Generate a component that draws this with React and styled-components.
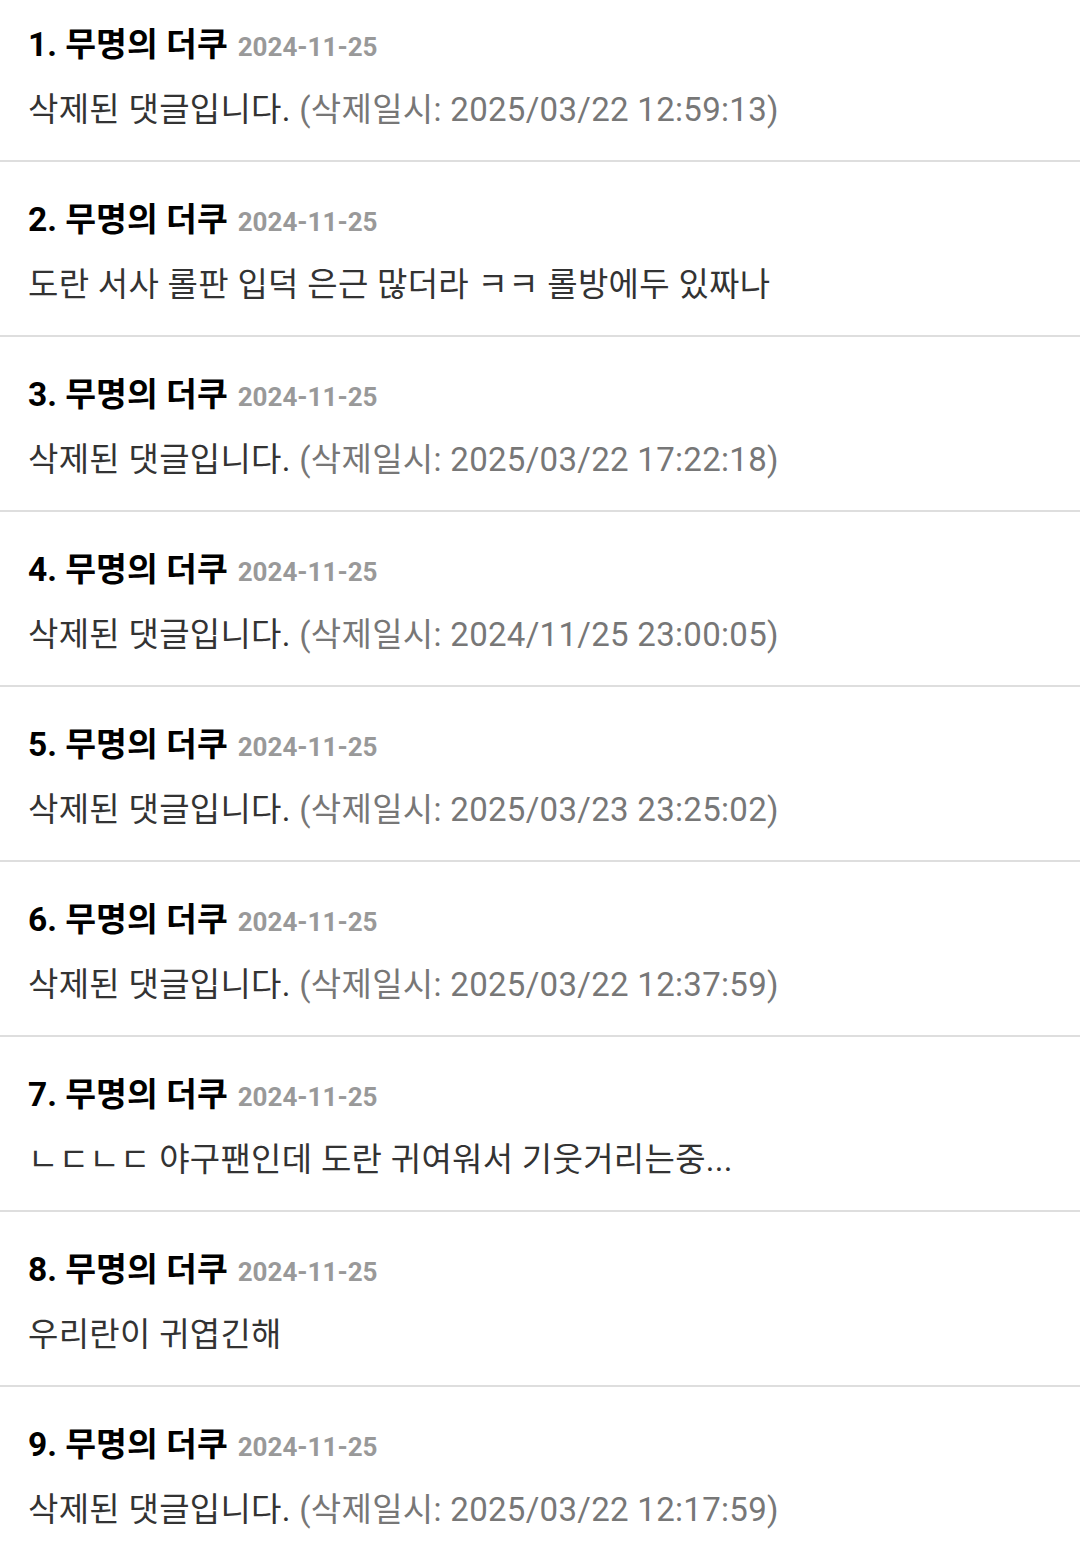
import React from 'react'
import styled, { createGlobalStyle } from 'styled-components'

const GlobalStyle = createGlobalStyle`
	html, body {
		margin: 0;
		padding: 0;
		background: #fff;
	}
	body {
		font-family: Roboto, 'Noto Sans CJK KR', sans-serif;
	}
`

const comments = [
	{ text: '삭제된 댓글입니다.', deleted: '2025/03/22 12:59:13' },
	{ text: '도란 서사 롤판 입덕 은근 많더라 ㅋㅋ 롤방에두 있짜나' },
	{ text: '삭제된 댓글입니다.', deleted: '2025/03/22 17:22:18' },
	{ text: '삭제된 댓글입니다.', deleted: '2024/11/25 23:00:05' },
	{ text: '삭제된 댓글입니다.', deleted: '2025/03/23 23:25:02' },
	{ text: '삭제된 댓글입니다.', deleted: '2025/03/22 12:37:59' },
	{ text: 'ㄴㄷㄴㄷ 야구팬인데 도란 귀여워서 기웃거리는중...' },
	{ text: '우리란이 귀엽긴해' },
	{ text: '삭제된 댓글입니다.', deleted: '2025/03/22 12:17:59' },
]

const StyledList = styled.ul`
	list-style: none;
	margin: 0;
	padding: 0;
`

const StyledItem = styled.li`
	height: 175px;
	box-sizing: border-box;
	padding: 36px 28px 0;
	border-bottom: 2px solid #dedede;
	display: flex;
	flex-direction: column;
	gap: 19px;
	&:first-child {
		height: 162px;
		padding-top: 23px;
	}
	&:last-child {
		border-bottom: none;
	}
`

const Header = styled.div`
	display: flex;
	align-items: baseline;
	gap: 10px;
	line-height: 44px;
`

const Name = styled.span`
	font-size: 33.5px;
	font-weight: 700;
	color: #000;
`

const DateText = styled.span`
	font-size: 26px;
	font-weight: 700;
	color: #999;
`

const Body = styled.p`
	margin: 0;
	font-size: 33px;
	line-height: 44px;
	letter-spacing: 0.3px;
	color: #333;
`

const DeletedAt = styled.span`
	color: #777;
`

export default function App() {
	return (
		<>
			<GlobalStyle />
			<StyledList>
				{comments.map((el, i) => (
					<StyledItem key={i}>
						<Header>
							<Name>{i + 1}. 무명의 더쿠</Name>
							<DateText>2024-11-25</DateText>
						</Header>
						<Body>
							{el.text}
							{el.deleted && (
								<DeletedAt> (삭제일시: {el.deleted})</DeletedAt>
							)}
						</Body>
					</StyledItem>
				))}
			</StyledList>
		</>
	)
}
